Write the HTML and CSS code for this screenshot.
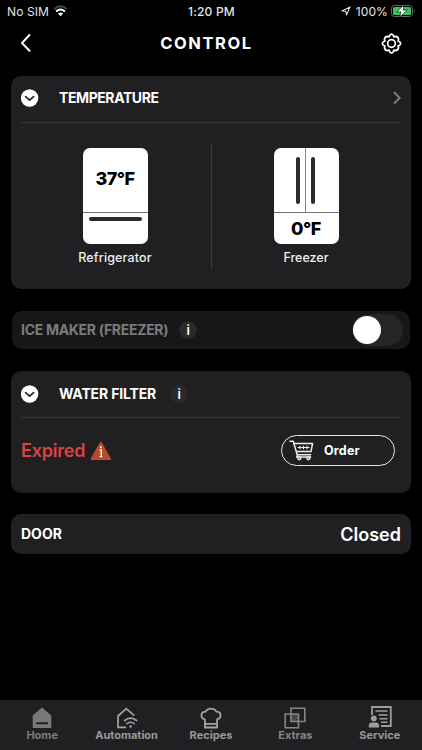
FILE: index.html
```html
<!DOCTYPE html>
<html lang="en">
<head>
    <meta charset="UTF-8">
    <meta name="viewport" content="width=device-width, initial-scale=1.0">
    <title>Control</title>
    <link rel="stylesheet" href="styles.css">
</head>
<body>
    <div class="status-bar">
        <div class="carrier">
            <span class="sim">No SIM</span>
            <svg width="15" height="12" viewBox="0 0 15 12" fill="none">
                <path d="M1 4.2Q7.5-1.8 14 4.2" stroke="#444" stroke-width="1.8"/>
                <path d="M3.1 6.5Q7.5 2.4 11.9 6.5" stroke="#fff" stroke-width="1.9"/>
                <path d="M7.5 11.2L4.9 8.6Q7.5 6.4 10.1 8.6Z" fill="#fff"/>
            </svg>
        </div>
        <span class="time">1:20 PM</span>
        <div class="battery">
            <svg width="10" height="10" viewBox="0 0 10 10" fill="none" stroke="#ddd" stroke-width="1.1" stroke-linejoin="round">
                <path d="M9 1L1 4.9L4.9 5.2L5.4 9Z"/>
            </svg>
            <span class="percent">100%</span>
            <svg width="25" height="14" viewBox="0 -1 25 14">
                <rect x=".5" y=".5" width="21" height="11" rx="3" fill="none" stroke="#666"/>
                <rect x="2" y="2" width="18" height="8" rx="1.6" fill="#35c759"/>
                <path d="M23 4Q24.6 6 23 8Z" fill="#777"/>
                <path d="M13 -.2L5.8 6.9H10L8.7 12.3L16.2 5H12Z" fill="#fff" stroke="#111" stroke-width=".7"/>
            </svg>
        </div>
    </div>

    <div class="header">
        <svg width="12" height="20" viewBox="0 0 12 20" fill="none" stroke="#fff" stroke-width="2" stroke-linecap="round" stroke-linejoin="round">
            <path d="M9.5 2L2 10L9.5 17.7"/>
        </svg>
        <h1>CONTROL</h1>
        <svg width="21" height="21" viewBox="0 0 24 24" fill="none" stroke="#fff" stroke-width="1.9" stroke-linejoin="round">
            <path d="M10 2.6Q12-.2 14 2.6L14.6 4.4L16.4 3.9Q19.8 4 20.1 7.6L19.4 9.2L21.2 10Q23.8 12 21.2 14L19.4 14.8L20.1 16.4Q19.8 20 16.4 20.1L14.6 19.6L14 21.4Q12 24.2 10 21.4L9.4 19.6L7.6 20.1Q4.2 20 3.9 16.4L4.6 14.8L2.8 14Q.2 12 2.8 10L4.6 9.2L3.9 7.6Q4.2 4 7.6 3.9L9.4 4.4Z"/>
            <circle cx="12" cy="12" r="4.4"/>
        </svg>
    </div>

    <div class="card temperature">
        <div class="card-title">
            <svg class="toggle-icon" width="18" height="18" viewBox="0 0 18 18">
                <circle cx="8.6" cy="9" r="8.7" fill="#fff"/>
                <path d="M4.6 7.6L8.6 11.1L12.6 7.6" fill="none" stroke="#202022" stroke-width="1.6" stroke-linecap="round" stroke-linejoin="round"/>
            </svg>
            <h2 class="t-temp">TEMPERATURE</h2>
            <svg class="arrow" width="9" height="14" viewBox="0 0 9 14" fill="none" stroke="#7c7c7f" stroke-width="2" stroke-linecap="round">
                <path d="M2.6 1.8L7.6 7L2.6 12"/>
            </svg>
        </div>
        <div class="zones">
            <div class="zone">
                <div class="fridge">
                    <div class="fridge-top cooler">37°F</div>
                    <div class="fridge-bottom"><span class="handle"></span></div>
                </div>
                <p class="l-fridge">Refrigerator</p>
            </div>
            <div class="zone">
                <div class="fridge">
                    <div class="fridge-top">
                        <div class="door"><span></span></div>
                        <div class="door"><span></span></div>
                    </div>
                    <div class="fridge-bottom value">0°F</div>
                </div>
                <p>Freezer</p>
            </div>
        </div>
    </div>

    <div class="card ice">
        <h2 class="t-ice">ICE MAKER (FREEZER)</h2>
        <span class="info">i</span>
        <div class="switch"><span></span></div>
    </div>

    <div class="card filter">
        <div class="card-title">
            <svg class="toggle-icon" width="18" height="18" viewBox="0 0 18 18">
                <circle cx="8.6" cy="9" r="8.7" fill="#fff"/>
                <path d="M4.6 7.6L8.6 11.1L12.6 7.6" fill="none" stroke="#202022" stroke-width="1.6" stroke-linecap="round" stroke-linejoin="round"/>
            </svg>
            <h2 class="t-filter">WATER FILTER</h2>
            <span class="info">i</span>
        </div>
        <div class="filter-row">
            <span class="expired">Expired</span>
            <svg width="22" height="20" viewBox="0 0 22 20">
                <path d="M10.8 1.8L20 18H1.6Z" fill="#b84b2b" stroke="#b84b2b" stroke-width="2" stroke-linejoin="round"/>
                <path d="M9.6 8.8H11.2V15.6M9.6 15.6H12.4" fill="none" stroke="#fff" stroke-width="1.3"/>
                <circle cx="10.9" cy="6.2" r="1" fill="#fff"/>
            </svg>
            <button class="order">
                <svg width="25" height="21" viewBox="0 0 25 21" fill="none" stroke="#e8eeee" stroke-width="1.5" stroke-linecap="round" stroke-linejoin="round">
                    <path d="M1 1.2H4.2L8.2 14.7H21.6M5 3.4H23.6L22 11.6H7.4M8.6 14.7L7.6 17H21.6"/>
                    <path d="M9 7.5H20M11 6.3V8.7M14.5 6.3V8.7M18 6.3V8.7" stroke-width="1.2"/>
                    <circle cx="10.3" cy="18.3" r="1.4"/>
                    <circle cx="19.4" cy="18.3" r="1.4"/>
                </svg>
                <span>Order</span>
            </button>
        </div>
    </div>

    <div class="card door-status">
        <h2>DOOR</h2>
        <span class="closed">Closed</span>
    </div>

    <div class="tab-bar">
        <div class="tab home">
            <svg width="22" height="22" viewBox="0 0 22 22">
                <path d="M11 .6L20.3 8.5V21H1.7V8.5Z" fill="#79797c"/>
                <rect x="5" y="15.2" width="12" height="2" rx=".8" fill="#202022"/>
            </svg>
            <span>Home</span>
        </div>
        <div class="tab automation">
            <svg width="22" height="22" viewBox="0 0 22 22" fill="none" stroke="#a2a2a4" stroke-width="1.7" stroke-linecap="round">
                <path d="M9.2 20.4H2V9L10.3 1.6L17.6 8" stroke-linecap="square"/>
                <path d="M8.6 13.5Q14.6 8.9 20.6 13.5M11 16.6Q14.6 13.9 18.2 16.6"/>
                <circle cx="14.6" cy="19.5" r="1.2" fill="#a2a2a4" stroke="none"/>
            </svg>
            <span>Automation</span>
        </div>
        <div class="tab recipes">
            <svg width="22" height="22" viewBox="0 0 22 22" fill="none" stroke="#a2a2a4" stroke-width="1.8" stroke-linejoin="round">
                <path d="M4.9 20.5V12.4C-.2 10.8 .6 4.3 5.7 4.6C7.3 .5 14.7 .5 16.3 4.6C21.4 4.3 22.2 10.8 17.1 12.4V20.5ZM5 16.8H17"/>
            </svg>
            <span>Recipes</span>
        </div>
        <div class="tab extras">
            <svg width="22" height="22" viewBox="0 0 22 22" fill="none" stroke="#858587" stroke-width="1.6">
                <path d="M7 1.2H20.8V14.5H7ZM1.2 7H14.5V20.8H1.2Z"/>
                <path d="M7 9.6L9.6 7M7 12.2L12.2 7M7.2 14.4L14.4 7.2M9.6 14.5L14.5 9.6M12.2 14.5L14.5 12.2" stroke-width="1"/>
            </svg>
            <span>Extras</span>
        </div>
        <div class="tab service">
            <svg width="24" height="22" viewBox="0 0 24 22">
                <path d="M4 9V1H22.8V20H13" fill="none" stroke="#9d9d9f" stroke-width="1.8"/>
                <path d="M7.5 5H19.5M10.5 9H19.5M11.5 12.7H19.5M13 16.3H19.5" stroke="#9d9d9f" stroke-width="1.6"/>
                <circle cx="5.8" cy="12.4" r="2.9" fill="#9d9d9f"/>
                <path d="M.8 21.4V19.5Q1 16.6 4 16.6H7.8Q10.8 16.6 11 19.5V21.4Z" fill="#9d9d9f"/>
            </svg>
            <span>Service</span>
        </div>
    </div>
</body>
</html>
```

FILE: styles.css
```css
* {
    box-sizing: border-box;
}

body {
    margin: 0;
    height: 750px;
    display: flex;
    flex-direction: column;
    background: #000;
    color: #fff;
    font-family: Inter, "Liberation Sans", sans-serif;
    overflow: hidden;
}

h1, h2, p {
    margin: 0;
}

svg {
    display: block;
    flex-shrink: 0;
}

.status-bar {
    height: 22px;
    display: grid;
    grid-template-columns: 1fr auto 1fr;
    align-items: center;
    padding: 0 6px 0 7px;
    font-size: 12px;
    color: #e4e4e4;
}

.carrier, .battery {
    display: flex;
    align-items: center;
}

.carrier {
    gap: 4px;
}

.sim {
    letter-spacing: 0.1px;
}

.time {
    font-weight: 500;
    letter-spacing: 0.2px;
}

.battery {
    justify-content: flex-end;
}

.percent {
    margin: 0 3px 0 5px;
    letter-spacing: 0.1px;
}

.header {
    height: 42px;
    display: flex;
    align-items: center;
    justify-content: space-between;
    padding: 0 20px;
}

.header h1 {
    font-size: 16.5px;
    font-weight: 700;
    letter-spacing: 1.6px;
}

.card {
    margin: 0 11px;
    border-radius: 10px;
    background: #202022;
    padding: 0 10px;
}

h2 {
    font-size: 14px;
    line-height: 20px;
    font-weight: 700;
    white-space: nowrap;
}

.card-title {
    height: 47px;
    display: flex;
    align-items: center;
    border-bottom: 1px solid #343437;
}

.toggle-icon {
    margin-right: 20px;
}

.t-temp {
    letter-spacing: -0.42px;
}

.t-ice {
    letter-spacing: -0.3px;
}

.t-filter {
    letter-spacing: -0.15px;
}

.arrow {
    margin-left: auto;
}

.temperature {
    height: 213px;
    margin-top: 12px;
}

.temperature .card-title {
    padding-bottom: 2px;
}

.zones {
    display: grid;
    grid-template-columns: 191px 1fr;
    height: 126px;
    margin-top: 20px;
}

.zone {
    display: flex;
    flex-direction: column;
    align-items: center;
    padding-top: 5px;
}

.zone:first-child {
    padding-right: 2px;
    border-right: 1px solid #39393b;
}

.zone:last-child {
    padding-right: 1px;
}

.fridge {
    width: 65px;
    height: 96px;
    border-radius: 7px;
    background: #fff;
    color: #000;
    font-size: 18px;
    font-weight: 800;
    letter-spacing: -0.5px;
}

.fridge-top {
    height: 65px;
    display: flex;
    justify-content: center;
    align-items: center;
    border-bottom: 1px solid #707070;
}

.cooler {
    padding-bottom: 4px;
}

.fridge-bottom {
    height: 31px;
    display: flex;
    justify-content: center;
}

.value {
    align-items: center;
}

.handle {
    width: 53px;
    height: 4px;
    margin-top: 4px;
    border-radius: 2px;
    background: #2c2c2e;
}

.door {
    width: 50%;
    height: 64px;
    display: flex;
    justify-content: flex-end;
    padding: 9px 5px 0;
}

.door:first-child {
    border-right: 1px solid #888;
}

.door:last-child {
    justify-content: flex-start;
}

.door span {
    width: 4px;
    height: 47px;
    border-radius: 2px;
    background: #2c2c2e;
}

.zone p {
    font-size: 12.5px;
    line-height: 16px;
    font-weight: 500;
    margin-top: 6px;
    color: #eee;
}

.zone .l-fridge {
    letter-spacing: 0.15px;
}

.ice {
    height: 38px;
    display: flex;
    align-items: center;
    margin: 22px 12px 0;
    padding: 0 7px 0 9px;
    background: #171719;
}

.ice h2 {
    color: #7b7b7d;
}

.info {
    width: 18px;
    height: 18px;
    margin-left: 11px;
    border-radius: 50%;
    background: #29292b;
    text-align: center;
    font-size: 13px;
    line-height: 18px;
    font-weight: 600;
}

.filter .info {
    margin-left: 14px;
}

.switch {
    width: 51px;
    height: 32px;
    margin-left: auto;
    padding: 2px 1px;
    border-radius: 16px;
    background: #252527;
}

.switch span {
    display: block;
    width: 28px;
    height: 28px;
    border-radius: 50%;
    background: #fff;
}

.filter {
    height: 122px;
    margin-top: 22px;
}

.filter-row {
    height: 65px;
    display: flex;
    align-items: center;
}

.expired {
    color: #da4345;
    font-size: 18px;
    font-weight: 600;
    letter-spacing: -0.2px;
    margin-right: 5px;
}

.order {
    width: 114px;
    height: 31px;
    margin: 0 6px 0 auto;
    padding: 0 0 0 7px;
    display: flex;
    align-items: center;
    gap: 10px;
    border: 1px solid #e5e5e5;
    border-radius: 16px;
    background: transparent;
    color: #fff;
    font-family: inherit;
    font-size: 12.5px;
    font-weight: 700;
    letter-spacing: 0.2px;
}

.door-status {
    height: 40px;
    margin-top: 21px;
    display: flex;
    align-items: center;
    justify-content: space-between;
}

.closed {
    font-size: 18px;
    font-weight: 600;
}

.tab-bar {
    height: 50px;
    margin-top: auto;
    display: grid;
    grid-template-columns: repeat(5, 1fr);
    background: #202022;
}

.tab {
    display: flex;
    flex-direction: column;
    align-items: center;
    padding-top: 7px;
    color: #98989a;
    font-size: 11px;
    line-height: 13px;
    font-weight: 700;
}

.home {
    color: #79797c;
}

.extras {
    color: #858587;
}

.service svg {
    margin-top: -1px;
    margin-bottom: 1px;
}
```
